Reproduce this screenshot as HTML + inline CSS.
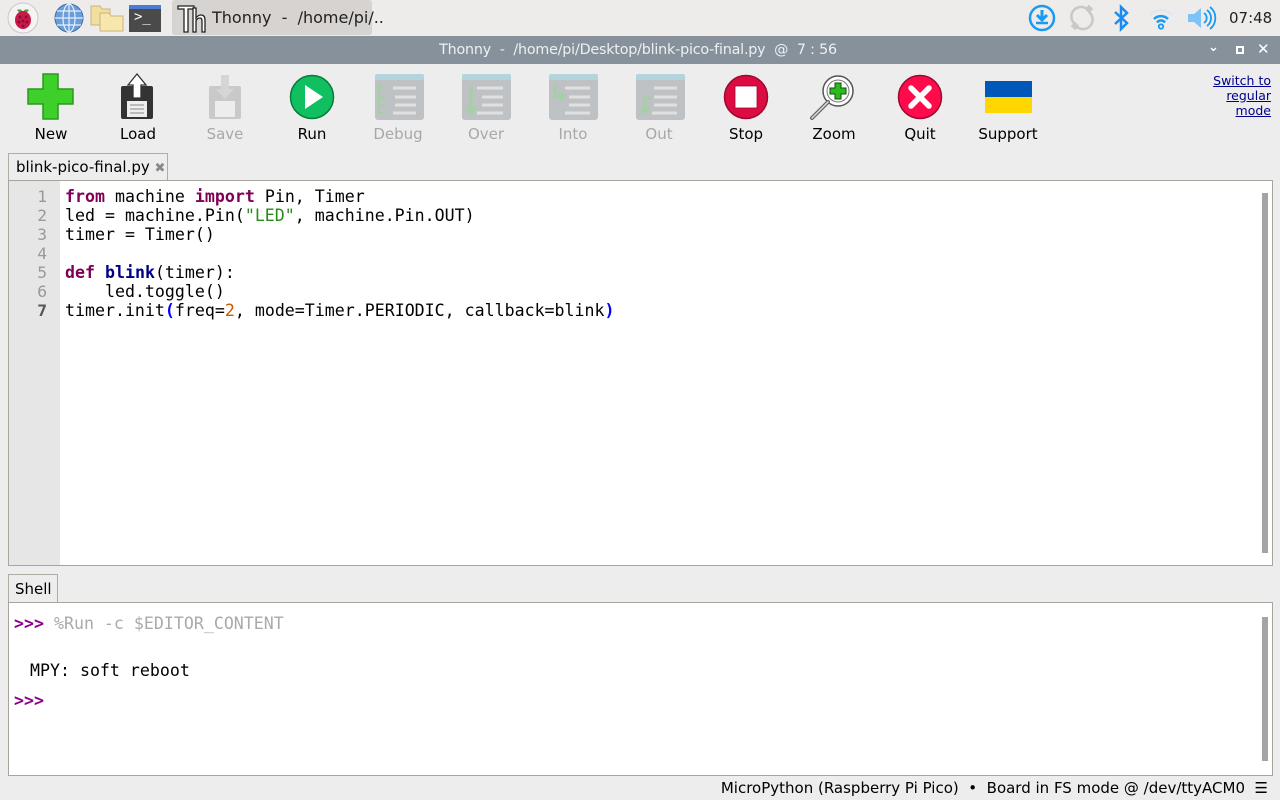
<!DOCTYPE html>
<html><head><meta charset="utf-8"><style>
*{margin:0;padding:0;box-sizing:border-box}
body{width:1280px;height:800px;background:#ededed;font-family:"DejaVu Sans","Liberation Sans",sans-serif;position:relative;overflow:hidden;color:#000}
.abs{position:absolute}
.mono{font-family:"DejaVu Sans Mono","Liberation Mono",monospace}
.lbl{position:absolute;top:125px;font-size:15px;width:100px;text-align:center}
.dis{color:#a8a8a8}
.kw{color:#7f0055;font-weight:bold}
</style></head><body>
<!-- taskbar -->
<div class="abs" style="left:0;top:0;width:1280px;height:36px;background:#edeceb"></div>
<svg class="abs" style="left:6px;top:2px" width="34" height="32" viewBox="0 0 34 32">
<circle cx="17" cy="16" r="15" fill="#f4f4f4" stroke="#c8c8c8"/>
<path d="M11 8 q4 -2 6 2 q2 -4 6 -2 q-2 3 -6 3 q-4 0 -6 -3z" fill="#5a9a3a"/>
<ellipse cx="17" cy="18" rx="8" ry="9" fill="#c51a4a"/>
<g fill="#8e0d2f"><circle cx="14" cy="15" r="1.4"/><circle cx="20" cy="15" r="1.4"/><circle cx="17" cy="19" r="1.4"/><circle cx="13" cy="20" r="1.4"/><circle cx="21" cy="20" r="1.4"/><circle cx="17" cy="24" r="1.4"/></g>
</svg>
<svg class="abs" style="left:53px;top:2px" width="32" height="32" viewBox="0 0 32 32">
<circle cx="16" cy="16" r="14" fill="#6a9ed8" stroke="#3d6ea8"/>
<g fill="none" stroke="#e6f0fb" stroke-width="1.2"><ellipse cx="16" cy="16" rx="6" ry="14"/><line x1="16" y1="2" x2="16" y2="30"/><line x1="2" y1="16" x2="30" y2="16"/><path d="M4 9h24M4 23h24"/></g>
</svg>
<svg class="abs" style="left:90px;top:4px" width="34" height="28" viewBox="0 0 34 28">
<path d="M1 2h9l2 3h8v16H1z" fill="#f2dfa0" stroke="#c9b57c"/>
<path d="M10 9h9l2 3h12v15H10z" fill="#f7e6ad" stroke="#c9b57c"/>
</svg>
<div class="abs" style="left:129px;top:5px;width:32px;height:27px;background:#4a4a4a;border-top:4px solid #4c7bd6"></div>
<div class="abs mono" style="left:134px;top:9px;color:#fff;font-size:14px">&gt;_</div>
<div class="abs" style="left:172px;top:0;width:200px;height:35px;background:#d6d3d0;border-radius:3px"></div>
<svg class="abs" style="left:176px;top:4px" width="32" height="30" viewBox="0 0 32 30">
<path d="M2 2h16v3h-6v23h-4V5H2z" fill="#fff" stroke="#222" stroke-width="1.3"/>
<path d="M17 4h3v10q2-3 5-3q4 0 4 5v12h-3V17q0-3-2-3q-3 0-4 3v11h-3z" fill="#fff" stroke="#222" stroke-width="1.3"/>
</svg>
<div class="abs" style="left:212px;top:8px;font-size:16px;color:#222">Thonny &nbsp;- &nbsp;/home/pi/..</div>
<svg class="abs" style="left:1027px;top:3px" width="30" height="30" viewBox="0 0 30 30">
<circle cx="15" cy="15" r="12" fill="none" stroke="#1a9af0" stroke-width="2.5"/>
<path d="M15 7v9M10 12l5 5 5-5" stroke="#1a9af0" stroke-width="3" fill="none"/><path d="M9 20h12" stroke="#1a9af0" stroke-width="2.5"/>
</svg>
<svg class="abs" style="left:1067px;top:4px" width="30" height="28" viewBox="0 0 30 28">
<path d="M8 20a9 9 0 0 1 12-15M22 8a9 9 0 0 1-12 15" fill="none" stroke="#c8c8c8" stroke-width="2.5"/>
<rect x="19" y="2" width="6" height="6" fill="#c8c8c8" transform="rotate(45 22 5)"/><rect x="5" y="19" width="6" height="6" fill="#c8c8c8" transform="rotate(45 8 22)"/>
</svg>
<svg class="abs" style="left:1111px;top:4px" width="20" height="28" viewBox="0 0 20 28">
<path d="M4 8l12 11-6 6V3l6 6L4 20" fill="none" stroke="#1a8cf0" stroke-width="2.5"/>
</svg>
<svg class="abs" style="left:1147px;top:5px" width="28" height="26" viewBox="0 0 28 26">
<path d="M3 10a15 15 0 0 1 22 0" fill="none" stroke="#dde8f2" stroke-width="2.5"/>
<path d="M7 14a10 10 0 0 1 14 0" fill="none" stroke="#1a9af0" stroke-width="2.5"/>
<path d="M10 17.5a5 5 0 0 1 8 0" fill="none" stroke="#1a9af0" stroke-width="2.5"/>
<circle cx="14" cy="21.5" r="2.2" fill="none" stroke="#1a9af0" stroke-width="1.8"/>
</svg>
<svg class="abs" style="left:1186px;top:5px" width="32" height="26" viewBox="0 0 32 26">
<path d="M2 9h6l7-6v20l-7-6H2z" fill="#7cc3f7"/>
<path d="M18 8a6 6 0 0 1 0 10M21 5a10 10 0 0 1 0 16M24 2a14 14 0 0 1 0 22" fill="none" stroke="#1a9af0" stroke-width="1.8"/>
</svg>
<div class="abs" style="left:1229px;top:9px;font-size:15px;color:#222">07:48</div>
<!-- title bar -->
<div class="abs" style="left:0;top:36px;width:1280px;height:28px;background:#87919b"></div>
<div class="abs" style="left:0;top:42px;width:1276px;text-align:center;font-size:14.3px;color:#eef0f2;letter-spacing:-0.2px">Thonny &nbsp;- &nbsp;/home/pi/Desktop/blink-pico-final.py &nbsp;@ &nbsp;7 : 56</div>
<div class="abs" style="left:1208px;top:40px;color:#fff;font-size:13px;font-weight:bold">&#8964;</div>
<div class="abs" style="left:1236px;top:46px;width:8px;height:8px;border:2px solid #fff"></div>
<div class="abs" style="left:1257px;top:40px;color:#fff;font-size:15px;font-weight:bold">✕</div>
<!-- toolbar icons -->
<svg class="abs" style="left:27px;top:73px" width="48" height="48" viewBox="0 0 48 48">
<path d="M16 1h15v15h15v15H31v15H16V31H1V16h15z" fill="#3fcf2a" stroke="#2a9a1c" stroke-width="1.5"/></svg>
<svg class="abs" style="left:118px;top:73px" width="40" height="48" viewBox="0 0 40 48">
<rect x="3" y="13" width="32" height="33" rx="2" fill="#333"/>
<rect x="9" y="28" width="20" height="16" fill="#eee"/><path d="M12 32h14M12 36h14M12 40h14" stroke="#888"/>
<path d="M19 1l9 11h-5v13h-8V12h-5z" fill="#fff" stroke="#333" stroke-width="1.3"/></svg>
<svg class="abs" style="left:206px;top:73px" width="40" height="48" viewBox="0 0 40 48" opacity=".35">
<rect x="3" y="13" width="32" height="33" rx="2" fill="#888"/>
<rect x="9" y="28" width="20" height="16" fill="#eee"/>
<path d="M15 2h8v14h5l-9 10-9-10h5z" fill="#aaa"/></svg>
<svg class="abs" style="left:289px;top:74px" width="46" height="46" viewBox="0 0 46 46">
<circle cx="23" cy="23" r="21.5" fill="#10c060" stroke="#087a3a" stroke-width="1.5"/>
<path d="M16 11l18 12-18 12z" fill="#fff"/></svg>
<svg class="abs" style="left:375px;top:74px" width="49" height="46" viewBox="0 0 49 46">
<rect width="49" height="46" rx="3" fill="#bfc2c5"/><rect width="49" height="6" rx="2" fill="#b4d4dd"/>
<path d="M18 14h23M20 23h21M20 31h21M18 39h23" stroke="#e0e0e0" stroke-width="3"/>
<path d="M4 10v30M4 14h7M4 23h7M4 31h7M4 39h7" stroke="#a5cfa4" stroke-width="2" fill="none"/></svg>
<svg class="abs" style="left:462px;top:74px" width="49" height="46" viewBox="0 0 49 46">
<rect width="49" height="46" rx="3" fill="#bfc2c5"/><rect width="49" height="6" rx="2" fill="#b4d4dd"/>
<path d="M15 14h26M20 23h21M20 31h21M15 39h26" stroke="#e0e0e0" stroke-width="3"/>
<path d="M9 12v26M4 33l5 6 5-6" stroke="#a5cfa4" stroke-width="3" fill="none"/></svg>
<svg class="abs" style="left:549px;top:74px" width="49" height="46" viewBox="0 0 49 46">
<rect width="49" height="46" rx="3" fill="#bfc2c5"/><rect width="49" height="6" rx="2" fill="#b4d4dd"/>
<path d="M16 14h25M20 23h21M20 31h21M16 39h25" stroke="#e0e0e0" stroke-width="3"/>
<path d="M6 10v12h8M11 18l4 4-4 4" stroke="#a5cfa4" stroke-width="3" fill="none"/></svg>
<svg class="abs" style="left:636px;top:74px" width="49" height="46" viewBox="0 0 49 46">
<rect width="49" height="46" rx="3" fill="#bfc2c5"/><rect width="49" height="6" rx="2" fill="#b4d4dd"/>
<path d="M18 14h23M18 23h23M18 31h23M16 39h25" stroke="#e0e0e0" stroke-width="3"/>
<path d="M16 24H9v14M5 34l4 5 4-5" stroke="#a5cfa4" stroke-width="3" fill="none"/></svg>
<svg class="abs" style="left:723px;top:74px" width="46" height="46" viewBox="0 0 46 46">
<circle cx="23" cy="23" r="21.5" fill="#de0a42" stroke="#9a0a30" stroke-width="1.5"/>
<rect x="12" y="12" width="22" height="22" fill="#fff" stroke="#9a0a30" stroke-width=".8"/></svg>
<svg class="abs" style="left:809px;top:74px" width="50" height="46" viewBox="0 0 50 46">
<circle cx="29" cy="17" r="15" fill="#fff" stroke="#555" stroke-width="1.5"/><circle cx="29" cy="17" r="11" fill="none" stroke="#777" stroke-width="1"/>
<path d="M26 9h6v5h5v6h-5v5h-6v-5h-5v-6h5z" fill="#2bbb1c" stroke="#114d0c"/>
<path d="M19 28L3 44" stroke="#666" stroke-width="4" stroke-linecap="round"/><path d="M19 28L3 44" stroke="#ddd" stroke-width="1.5" stroke-linecap="round"/></svg>
<svg class="abs" style="left:897px;top:74px" width="46" height="46" viewBox="0 0 46 46">
<circle cx="23" cy="23" r="21.5" fill="#ff0a4a" stroke="#9a0a30" stroke-width="1.5"/>
<path d="M14 14l18 18M32 14L14 32" stroke="#fff" stroke-width="5.5" stroke-linecap="round"/></svg>
<div class="abs" style="left:985px;top:81px;width:47px;height:16px;background:#0057b8"></div>
<div class="abs" style="left:985px;top:97px;width:47px;height:16px;background:#ffd700"></div>
<div class="lbl" style="left:1px">New</div>
<div class="lbl" style="left:88px">Load</div>
<div class="lbl dis" style="left:175px">Save</div>
<div class="lbl" style="left:262px">Run</div>
<div class="lbl dis" style="left:348px">Debug</div>
<div class="lbl dis" style="left:436px">Over</div>
<div class="lbl dis" style="left:523px">Into</div>
<div class="lbl dis" style="left:609px">Out</div>
<div class="lbl" style="left:696px">Stop</div>
<div class="lbl" style="left:784px">Zoom</div>
<div class="lbl" style="left:870px">Quit</div>
<div class="lbl" style="left:958px">Support</div>
<div class="abs" style="right:9px;top:73px;font-size:12.5px;line-height:15px;text-align:right;color:#00008b;text-decoration:underline">Switch to<br>regular<br>mode</div>
<!-- editor tab -->
<div class="abs" style="left:8px;top:153px;width:160px;height:29px;background:#ededed;border:1px solid #b0aca4;border-bottom:none"></div>
<div class="abs" style="left:16px;top:158px;font-size:15px">blink-pico-final.py <span style="color:#888;font-size:13px">✖</span></div>
<!-- editor -->
<div class="abs" style="left:8px;top:180px;width:1265px;height:386px;background:#fff;border:1px solid #a9a59d"></div>
<div class="abs" style="left:9px;top:181px;width:51px;height:384px;background:#e6e6e6"></div>
<div class="abs" style="left:1260px;top:183px;width:10px;height:380px"><div style="margin:10px 2px;width:6px;height:360px;background:#a4a4a4"></div></div>
<pre class="abs mono" style="left:9px;top:187px;width:38px;text-align:right;font-size:16.3px;line-height:19px;color:#999">1
2
3
4
5
6
<span style="color:#555;font-weight:bold">7</span></pre>
<pre class="abs mono" style="left:65px;top:187px;font-size:16.6px;line-height:19px;color:#000"><span class="kw">from</span> machine <span class="kw">import</span> Pin, Timer
led = machine.Pin(<span style="color:#2a8a1c">"LED"</span>, machine.Pin.OUT)
timer = Timer()

<span class="kw">def</span> <span style="color:#000087;font-weight:bold">blink</span>(timer):
    led.toggle()
timer.init<span style="color:#0000ff;font-weight:bold">(</span>freq=<span style="color:#c85a00">2</span>, mode=Timer.PERIODIC, callback=blink<span style="color:#0000ff;font-weight:bold">)</span></pre>
<!-- shell tab -->
<div class="abs" style="left:8px;top:574px;width:50px;height:30px;background:#ededed;border:1px solid #b0aca4;border-bottom:none"></div>
<div class="abs" style="left:15px;top:580px;font-size:15px">Shell</div>
<div class="abs" style="left:8px;top:602px;width:1265px;height:174px;background:#fff;border:1px solid #a9a59d"></div>
<div class="abs" style="left:1260px;top:605px;width:10px;height:168px"><div style="margin:12px 2px;width:6px;height:144px;background:#a4a4a4"></div></div>
<pre class="abs mono" style="left:14px;top:614px;font-size:16.6px;line-height:19px;color:#000"><span style="color:#8b008b;font-weight:bold">&gt;&gt;&gt;</span> <span style="color:#aaa">%Run -c $EDITOR_CONTENT</span></pre>
<pre class="abs mono" style="left:30px;top:661px;font-size:16.6px;line-height:19px;color:#000">MPY: soft reboot</pre>
<pre class="abs mono" style="left:14px;top:691px;font-size:16.6px;line-height:19px;color:#8b008b;font-weight:bold">&gt;&gt;&gt;</pre>
<!-- status -->
<div class="abs" style="right:12px;top:779px;font-size:15px;white-space:nowrap">MicroPython (Raspberry Pi Pico) &nbsp;• &nbsp;Board in FS mode @ /dev/ttyACM0 &nbsp;☰</div>
</body></html>
